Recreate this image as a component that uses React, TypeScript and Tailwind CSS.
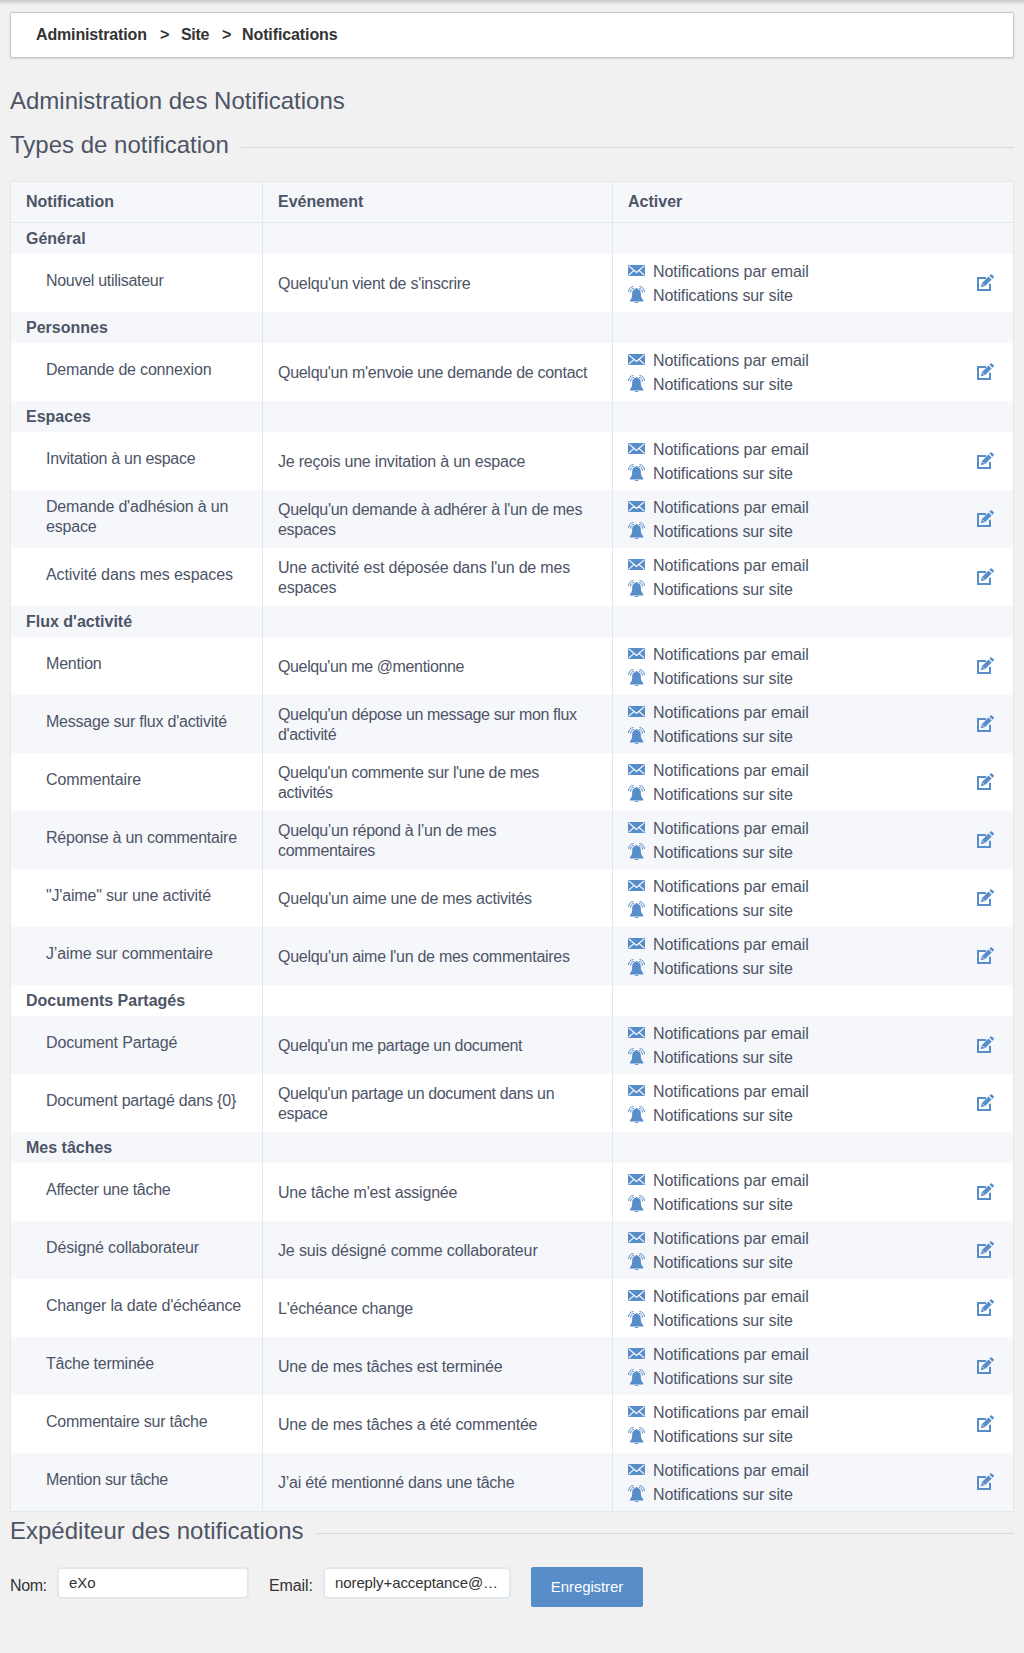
type Item = { name: string; event: string; nameTrack: string; eventTrack: string };
type Group = { title: string; items: Item[] };

const groups: Group[] = [
  {
    title: "Général",
    items: [{ name: "Nouvel utilisateur", event: "Quelqu'un vient de s'inscrire", nameTrack: "tracking-[-0.29px]", eventTrack: "tracking-[-0.26px]" }],
  },
  {
    title: "Personnes",
    items: [{ name: "Demande de connexion", event: "Quelqu'un m'envoie une demande de contact", nameTrack: "tracking-[-0.18px]", eventTrack: "tracking-[-0.29px]" }],
  },
  {
    title: "Espaces",
    items: [
      { name: "Invitation à un espace", event: "Je reçois une invitation à un espace", nameTrack: "tracking-[-0.29px]", eventTrack: "tracking-[-0.2px]" },
      { name: "Demande d'adhésion à un espace", event: "Quelqu'un demande à adhérer à l'un de mes espaces", nameTrack: "tracking-[-0.18px]", eventTrack: "tracking-[-0.28px]" },
      { name: "Activité dans mes espaces", event: "Une activité est déposée dans l'un de mes espaces", nameTrack: "tracking-[-0.1px]", eventTrack: "tracking-[-0.2px]" },
    ],
  },
  {
    title: "Flux d'activité",
    items: [
      { name: "Mention", event: "Quelqu'un me @mentionne", nameTrack: "tracking-[-0.2px]", eventTrack: "tracking-[-0.37px]" },
      { name: "Message sur flux d'activité", event: "Quelqu'un dépose un message sur mon flux d'activité", nameTrack: "tracking-[-0.23px]", eventTrack: "tracking-[-0.35px]" },
      { name: "Commentaire", event: "Quelqu'un commente sur l'une de mes activités", nameTrack: "tracking-[-0.1px]", eventTrack: "tracking-[-0.34px]" },
      { name: "Réponse à un commentaire", event: "Quelqu’un répond à l’un de mes commentaires", nameTrack: "tracking-[-0.24px]", eventTrack: "tracking-[-0.29px]" },
      { name: "\"J'aime\" sur une activité", event: "Quelqu'un aime une de mes activités", nameTrack: "tracking-[-0.17px]", eventTrack: "tracking-[-0.23px]" },
      { name: "J’aime sur commentaire", event: "Quelqu'un aime l'un de mes commentaires", nameTrack: "tracking-[-0.14px]", eventTrack: "tracking-[-0.27px]" },
    ],
  },
  {
    title: "Documents Partagés",
    items: [
      { name: "Document Partagé", event: "Quelqu'un me partage un document", nameTrack: "tracking-[-0.13px]", eventTrack: "tracking-[-0.33px]" },
      { name: "Document partagé dans {0}", event: "Quelqu'un partage un document dans un espace", nameTrack: "tracking-[-0.19px]", eventTrack: "tracking-[-0.36px]" },
    ],
  },
  {
    title: "Mes tâches",
    items: [
      { name: "Affecter une tâche", event: "Une tâche m'est assignée", nameTrack: "tracking-[-0.29px]", eventTrack: "tracking-[-0.18px]" },
      { name: "Désigné collaborateur", event: "Je suis désigné comme collaborateur", nameTrack: "tracking-[-0.13px]", eventTrack: "tracking-[-0.13px]" },
      { name: "Changer la date d'échéance", event: "L'échéance change", nameTrack: "tracking-[-0.18px]", eventTrack: "tracking-[-0.19px]" },
      { name: "Tâche terminée", event: "Une de mes tâches est terminée", nameTrack: "tracking-[-0.23px]", eventTrack: "tracking-[-0.2px]" },
      { name: "Commentaire sur tâche", event: "Une de mes tâches a été commentée", nameTrack: "tracking-[-0.23px]", eventTrack: "tracking-[-0.2px]" },
      { name: "Mention sur tâche", event: "J’ai été mentionné dans une tâche", nameTrack: "tracking-[-0.31px]", eventTrack: "tracking-[-0.22px]" },
    ],
  },
];

type Row = { kind: "title"; title: string } | ({ kind: "item" } & Item);

const rows: Row[] = groups.flatMap((g): Row[] => [
  { kind: "title", title: g.title },
  ...g.items.map((i): Row => ({ kind: "item", ...i })),
]);

function MailIcon() {
  return (
    <svg className="block h-[11px] w-[17px]" viewBox="0 0 17 11">
      <rect width="17" height="11" rx="0.8" fill="#578dc9" />
      <path d="M0.8 0.9 8.5 7.4 16.2 0.9M0.8 10.2 6 5.4M16.2 10.2 11 5.4" fill="none" stroke="#fff" strokeWidth="1.15" />
    </svg>
  );
}

function BellIcon() {
  return (
    <svg className="block h-[17px] w-[17px]" viewBox="0 0 17 17">
      <path
        d="M8.500 2c.7 0 1 .4 1.100.9 2.300.4 3.200 2 3.200 4.300 0 3.300.5 5.200 2.500 7v1.300H2v-1.300c1.900-1.800 2.200-3.700 2.200-7 0-2.300.9-3.900 3.200-4.300.1-.5.400-.9 1.100-.9z"
        fill="#578dc9"
      />
      <path d="M6.500 16h4.200q-.5 1-2.100 1t-2.100-1z" fill="#578dc9" />
      <path
        d="M.5 6C.7 3 2.500.8 5.500.5M2.500 6.500C2.600 4.300 3.900 2.700 6 2.300M16.500 6C16.300 3 14.500.8 11.500.5M14.500 6.500C14.400 4.300 13.100 2.700 11 2.300"
        fill="none"
        stroke="#578dc9"
        strokeWidth="1"
      />
    </svg>
  );
}

function EditIcon() {
  return (
    <svg className="mb-0.5 block size-[17px]" viewBox="0 0 17 17">
      <path d="M9 4H1v12h12V9.800" fill="none" stroke="#578dc9" strokeWidth="2" />
      <path d="M3.800 13.300 5 9 11.500 2.400 14.700 5.600 8.200 12.100z" fill="#578dc9" />
      <path d="M12.400 1.600 13.600.4Q14.200-.1 14.800.4L16.700 2.300Q17.200 2.900 16.700 3.500L15.500 4.700z" fill="#578dc9" />
      <path d="M5.400 9.700 7.500 11.800" stroke="#fff" strokeWidth="0.7" />
    </svg>
  );
}

function SectionTitle({ children }: { children: string }) {
  return (
    <div className="flex items-center gap-3">
      <h2 className="text-2xl leading-10 whitespace-nowrap">{children}</h2>
      <div className="mt-[5px] h-px flex-1 bg-[#d5d9da]" />
    </div>
  );
}

const grid = "grid grid-cols-[252px_350px_400px]";
const cell = "border-r border-[#e1e8ee] px-[15px]";

export default function App() {
  return (
    <div className="h-[1653px] overflow-hidden bg-[#f1f1f1] font-['Liberation_Sans',Arial,sans-serif] text-base text-[#4d5466]">
      <div className="h-[5px] bg-linear-to-b from-[#c6c6c6] to-[#f1f1f1]" />
      <div className="px-[10px] pt-[7px]">
        <nav className="flex h-[46px] items-center rounded-[2px] border border-[#c7c7c7] bg-white pl-[25px] font-bold text-[#333] shadow-[0_1px_2px_rgba(0,0,0,0.12)]">
          <span className="w-[124px] tracking-[-0.15px]">Administration</span>
          <span className="w-[21px]">&gt;</span>
          <span className="w-[41px] tracking-[-0.3px]">Site</span>
          <span className="w-5">&gt;</span>
          <span className="tracking-[-0.1px]">Notifications</span>
        </nav>
        <h1 className="mt-[23px] text-2xl leading-10">Administration des Notifications</h1>
        <div className="mt-1">
          <SectionTitle>Types de notification</SectionTitle>
        </div>
        <div className="mt-4 border border-[#e1e8ee]">
          <div className={`${grid} h-[41px] border-b border-[#e1e8ee] bg-[#f5f7fa] leading-10 font-bold`}>
            <div className={cell}>Notification</div>
            <div className={cell}>Evénement</div>
            <div className="px-[15px]">Activer</div>
          </div>
          {rows.map((row, i) => {
            const bg = i % 2 === 0 ? "bg-[#f5f7fb]" : "bg-white";
            if (row.kind === "title") {
              return (
                <div key={i} className={`${grid} ${bg} h-[31px] leading-[31px] font-bold`}>
                  <div className={cell}>{row.title}</div>
                  <div className={cell} />
                  <div />
                </div>
              );
            }
            return (
              <div key={i} className={`${grid} ${bg} h-[58px] leading-5`}>
                <div className={`${cell} ${row.nameTrack} flex items-center pb-[5px] pl-[35px]`}>{row.name}</div>
                <div className={`${cell} ${row.eventTrack} flex items-center pt-0.5`}>{row.event}</div>
                <div className="flex items-center justify-between pr-[19px] pl-[15px] leading-6">
                  <div className="pt-0.5">
                    <div className="flex items-center gap-2 tracking-[-0.07px]">
                      <div className="pb-[3px]">
                        <MailIcon />
                      </div>
                      Notifications par email
                    </div>
                    <div className="flex items-center gap-2 tracking-[-0.15px]">
                      <div className="pb-[3px]">
                        <BellIcon />
                      </div>
                      Notifications sur site
                    </div>
                  </div>
                  <EditIcon />
                </div>
              </div>
            );
          })}
        </div>
        <div className="-mt-px">
          <SectionTitle>Expéditeur des notifications</SectionTitle>
        </div>
        <div className="mt-4 flex items-start text-[#333]">
          <span className="w-[47px] leading-[38px] tracking-[-0.4px]">Nom:</span>
          <div className="h-8 w-[192px] rounded-[5px] border-2 border-[#e1e8ee] bg-white px-[10px] text-[15px] leading-7">eXo</div>
          <span className="ml-5 w-[54px] leading-[38px] tracking-[-0.1px]">Email:</span>
          <div className="h-8 w-[188px] rounded-[5px] border-2 border-[#e1e8ee] bg-white px-[10px] text-[15px] leading-7 tracking-[-0.1px] whitespace-nowrap">
            noreply+acceptance@…
          </div>
          <button className="ml-5 h-10 w-28 rounded-[2px] bg-[#578dc9] text-[15px] tracking-[-0.1px] text-white">Enregistrer</button>
        </div>
      </div>
    </div>
  );
}
